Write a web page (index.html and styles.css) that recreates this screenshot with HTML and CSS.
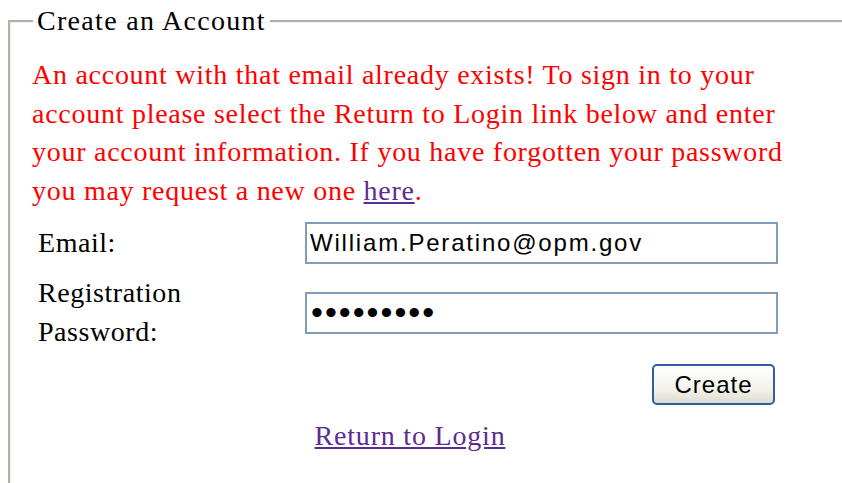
FILE: index.html
```html
<!DOCTYPE html>
<html lang="en">
<head>
<meta charset="utf-8">
<title>Create an Account</title>
<link rel="stylesheet" href="styles.css">
</head>
<body>
<fieldset class="account-box">
  <legend class="account-legend">Create an Account</legend>
  <p class="error-msg">An account with that email already exists! To sign in to your account please select the Return to Login link below and enter your account information. If you have forgotten your password you may request a new one <a href="#" class="link">here</a>.</p>
  <form class="account-form">
    <div class="form-row">
      <label class="form-label" for="email">Email:</label>
      <input class="form-input" id="email" type="text" value="William.Peratino@opm.gov">
    </div>
    <div class="form-row">
      <label class="form-label" for="pw">Registration<br>Password:</label>
      <input class="form-input form-pw" id="pw" type="password" value="abcdefghi">
    </div>
    <div class="form-actions">
      <button type="button" class="btn">Create</button>
    </div>
    <div class="form-return">
      <a href="#" class="link">Return to Login</a>
    </div>
  </form>
</fieldset>
</body>
</html>
```
FILE: styles.css
```css
html, body {
  overflow: hidden;
}
body {
  margin: 0;
  background: #fff;
  font-family: "Liberation Serif", "Times New Roman", serif;
  font-size: 28px;
  color: #000;
}
.account-box {
  margin: 9px 0 0 8px;
  padding: 0 0 60px 22px;
  width: 900px;
  border: 0;
  border-top: 2px solid #b0b0a8;
  border-left: 2px solid #b0b0a8;
  box-shadow: inset 1px 1px 0 #f0f0ea;
  min-height: 520px;
}
.account-legend {
  padding: 0 4px;
  margin-left: 1px;
  line-height: 24px;
  letter-spacing: 1.3px;
}
.error-msg {
  margin: 23px 0 0 0;
  width: 790px;
  color: #ff0000;
  line-height: 38.5px;
  letter-spacing: 0.73px;
}
.link {
  color: #5c2d91;
}
.account-form {
  margin-top: 12px;
  width: 746px;
}
.form-row {
  display: grid;
  grid-template-columns: 273px 473px;
  align-items: center;
  margin-bottom: 10px;
}
.form-label {
  padding-left: 6px;
  line-height: 38.5px;
  letter-spacing: 0.55px;
}
.form-input {
  box-sizing: border-box;
  width: 473px;
  height: 42px;
  border: 2px solid #7f9db9;
  padding: 0 3px;
  font-family: "Liberation Sans", Arial, sans-serif;
  font-size: 24px;
  letter-spacing: 1.8px;
  color: #000;
}
.form-pw {
  font-size: 34px;
  letter-spacing: 2px;
  padding-left: 4px;
}
.form-actions {
  display: flex;
  justify-content: flex-end;
  margin-top: 13px;
  padding-right: 3px;
}
.btn {
  width: 123px;
  height: 41px;
  border: 2px solid #2f5f9f;
  border-radius: 5px;
  background: linear-gradient(#ffffff, #f2f1ea 65%, #dddbd0);
  font-family: "Liberation Sans", Arial, sans-serif;
  font-size: 24px;
  letter-spacing: 1px;
  color: #000;
  padding: 0;
}
.form-return {
  text-align: center;
  margin-top: 15px;
  padding-left: 10px;
  letter-spacing: 0.8px;
}
```
